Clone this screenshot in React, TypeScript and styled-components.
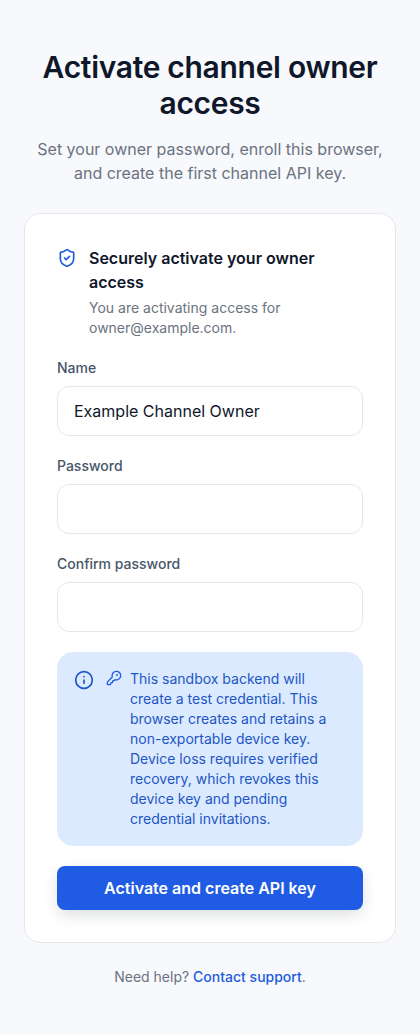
import React from "react";
import styled, { createGlobalStyle } from "styled-components";
import { Info, KeyRound, ShieldCheck } from "lucide-react";

const GlobalStyle = createGlobalStyle`
  * {
    box-sizing: border-box;
  }
  body {
    margin: 0;
    background-color: #f7f9fc;
    font-family: Inter, "Liberation Sans", sans-serif;
    color: #0f172a;
  }
`;

const Page = styled.main`
  min-height: 1035px;
  padding: 49px 24px 0;
`;

const Header = styled.header`
  text-align: center;
`;

const Title = styled.h1`
  margin: 0;
  font-size: 30px;
  line-height: 36px;
  font-weight: 600;
  letter-spacing: -0.3px;
  color: #0f172a;
`;

const Subtitle = styled.p`
  margin: 16px 0 0;
  font-size: 16px;
  line-height: 24px;
  color: #6b7280;
`;

const Card = styled.section`
  margin-top: 28px;
  padding: 32px;
  background-color: #fff;
  border: 1px solid #e5e7eb;
  border-radius: 16px;
`;

const Intro = styled.div`
  display: flex;
  gap: 12px;
`;

const IntroIcon = styled(ShieldCheck)`
  flex: none;
  width: 20px;
  height: 20px;
  margin-top: 2px;
  color: #1d5ce0;
`;

const IntroTitle = styled.h2`
  margin: 0;
  font-size: 16px;
  line-height: 24px;
  font-weight: 600;
  color: #0f172a;
`;

const IntroText = styled.p`
  margin: 4px 0 0;
  font-size: 14px;
  line-height: 20px;
  color: #6b7280;
`;

const Form = styled.form`
  display: flex;
  flex-direction: column;
  gap: 20px;
  margin-top: 20px;
`;

const Field = styled.div`
  display: flex;
  flex-direction: column;
  gap: 8px;
`;

const Label = styled.label`
  font-size: 14px;
  line-height: 20px;
  font-weight: 500;
  color: #475569;
`;

const Input = styled.input`
  width: 100%;
  height: 50px;
  padding: 0 16px;
  background-color: #fff;
  border: 1px solid #e5e7eb;
  border-radius: 12px;
  font-family: inherit;
  font-size: 16px;
  color: #0f172a;
  outline: none;
`;

const Notice = styled.div`
  display: flex;
  padding: 16px;
  background-color: #dbeafe;
  border: 1px solid #dbeafe;
  border-radius: 16px;
`;

const NoticeInfo = styled(Info)`
  flex: none;
  width: 20px;
  height: 20px;
  margin-top: 1px;
  color: #1e56c4;
`;

const NoticeKey = styled(KeyRound)`
  flex: none;
  width: 16px;
  height: 16px;
  margin: 1px 8px 0 12px;
  color: #1d5ce0;
`;

const NoticeText = styled.p`
  margin: 0;
  font-size: 14px;
  line-height: 20px;
  color: #1e56c4;
`;

const Submit = styled.button`
  height: 44px;
  background-color: #1f5ce3;
  border: none;
  border-radius: 8px;
  box-shadow: 0 6px 16px -2px rgba(15, 23, 42, 0.16);
  font-family: inherit;
  font-size: 16px;
  font-weight: 600;
  color: #fff;
  cursor: pointer;
`;

const Footer = styled.p`
  margin: 24px 0 0;
  text-align: center;
  font-size: 14px;
  line-height: 20px;
  color: #6b7280;
`;

const SupportLink = styled.a`
  font-weight: 500;
  color: #1d5ce0;
  text-decoration: none;
`;

export default function App() {
  return (
    <>
      <GlobalStyle />
      <Page>
        <Header>
          <Title>Activate channel owner access</Title>
          <Subtitle>Set your owner password, enroll this browser, and create the first channel API key.</Subtitle>
        </Header>
        <Card>
          <Intro>
            <IntroIcon />
            <div>
              <IntroTitle>Securely activate your owner access</IntroTitle>
              <IntroText>You are activating access for owner@example.com.</IntroText>
            </div>
          </Intro>
          <Form onSubmit={(e) => e.preventDefault()}>
            <Field>
              <Label htmlFor="name">Name</Label>
              <Input id="name" type="text" defaultValue="Example Channel Owner" />
            </Field>
            <Field>
              <Label htmlFor="password">Password</Label>
              <Input id="password" type="password" />
            </Field>
            <Field>
              <Label htmlFor="confirm">Confirm password</Label>
              <Input id="confirm" type="password" />
            </Field>
            <Notice>
              <NoticeInfo />
              <NoticeKey />
              <NoticeText>
                This sandbox backend will create a test credential. This browser creates and retains a non-exportable
                device key. Device loss requires verified recovery, which revokes this device key and pending
                credential invitations.
              </NoticeText>
            </Notice>
            <Submit type="submit">Activate and create API key</Submit>
          </Form>
        </Card>
        <Footer>
          Need help? <SupportLink href="#">Contact support</SupportLink>.
        </Footer>
      </Page>
    </>
  );
}
